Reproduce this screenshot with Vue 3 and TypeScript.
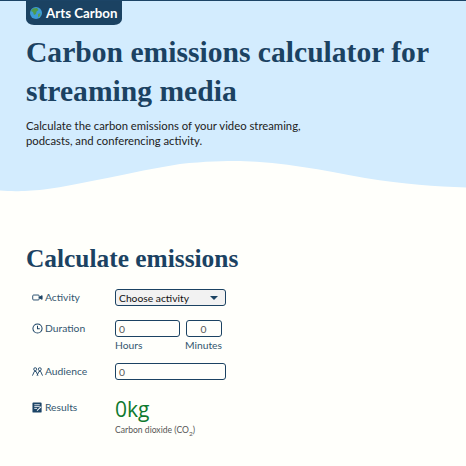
<script setup lang="ts">
const minutes = "0";
</script>

<template>
  <div class="page">
    <header class="hero">
      <div class="brand">
        <svg class="globe" viewBox="0 0 12 12" width="12" height="12">
          <circle cx="6" cy="6" r="6" fill="#3d9bd6" />
          <path d="M3 1.500 7 1l1.500 2-2 1.500L6 7 4 8 3 5 1 4z" fill="#4f9a4a" />
          <path d="M8 7l2.500-1-.5 3-2 1.500z" fill="#5aa04f" />
        </svg>
        <span>Arts Carbon</span>
      </div>
      <h1>Carbon emissions calculator for streaming media</h1>
      <p>Calculate the carbon emissions of your video streaming, podcasts, and conferencing activity.</p>
    </header>
    <svg class="wave" viewBox="0 0 466 40" width="466" height="40" preserveAspectRatio="none">
      <path d="M0 40V29.500C12 30.500 24 30.500 44 28.500C85 23 130 11 180 3C205 .3 225 0 240 0C285 1 320 9 365 17C405 23.500 435 25.500 466 26.500V40Z" fill="#fffffb" />
    </svg>
    <main class="calc">
      <h2>Calculate emissions</h2>
      <div class="row row-activity">
        <div class="label">
          <svg viewBox="0 0 12 12" width="11" height="11" fill="none" stroke="#1c4466" stroke-width="1">
            <rect x=".8" y="3.300" width="7" height="5.400" rx="1" />
            <path d="M8 5.500 11 4v4L8 6.500z" fill="#1c4466" />
          </svg>
          <span>Activity</span>
        </div>
        <div class="select">
          <span>Choose activity</span>
          <i class="caret"></i>
        </div>
      </div>
      <div class="row row-duration">
        <div class="label">
          <svg viewBox="0 0 12 12" width="11" height="11" fill="none" stroke="#1c4466" stroke-width="1.100">
            <circle cx="6" cy="6" r="5" />
            <path d="M6 3v3.300h2.500" />
          </svg>
          <span>Duration</span>
        </div>
        <div class="time">
          <div class="field">
            <div class="input hours">0</div>
            <span>Hours</span>
          </div>
          <div class="field minutes">
            <div class="input mins">{{ minutes }}</div>
            <span>Minutes</span>
          </div>
        </div>
      </div>
      <div class="row row-audience">
        <div class="label">
          <svg viewBox="0 0 12 12" width="11" height="11" fill="none" stroke="#1c4466" stroke-width="1">
            <circle cx="3.500" cy="3.500" r="1.600" />
            <circle cx="8.500" cy="3.500" r="1.600" />
            <path d="M.5 10.500 2.500 6h2l2 4.500M5.500 10.500l2-4.500h2l2 4.500" />
          </svg>
          <span>Audience</span>
        </div>
        <div class="input audience">0</div>
      </div>
      <div class="row row-results">
        <div class="label">
          <svg viewBox="0 0 12 12" width="11" height="11">
            <rect x=".5" y=".5" width="10" height="11" rx="1" fill="#1c4466" />
            <path d="M2.500 3h6M2.500 5h6M2.500 7h3" stroke="#fff" stroke-width=".9" />
            <path d="M5.500 9.500 10 5" stroke="#fff" stroke-width="1.100" />
          </svg>
          <span>Results</span>
        </div>
        <div class="result">
          <div class="value">0kg</div>
          <div class="unit">Carbon dioxide (CO<sub>2</sub>)</div>
        </div>
      </div>
    </main>
  </div>
</template>

<style>
html, body { margin: 0; background: #fffffb; overflow: hidden; }
</style>

<style scoped>
.page {
  width: 466px;
  height: 466px;
  overflow: hidden;
  font-family: Lato, "Open Sans", sans-serif;
  color: #1c4466;
  background: #fffffb;
}
.hero {
  background: #d3ecfe;
  border-top: 1px solid #1c4466;
  height: 161px;
  box-sizing: border-box;
  padding: 0 26px;
}
.brand {
  display: inline-flex;
  align-items: center;
  gap: 4px;
  height: 24px;
  padding: 0 0 0 4px;
  width: 96px;
  box-sizing: border-box;
  background: #1b4262;
  border-radius: 0 0 8px 8px / 0 0 6px 6px;
  color: #fff;
  font-weight: 700;
  font-size: 13.300px;
  white-space: nowrap;
  vertical-align: top;
}
.globe { flex: none; }
h1 {
  margin: 8px 0 0;
  font-family: "Liberation Serif", serif;
  font-weight: 700;
  font-size: 29.600px;
  line-height: 39px;
  color: #1b4262;
}
.hero p {
  margin: 7px 0 0;
  font-size: 11.300px;
  line-height: 15px;
  color: #222;
  max-width: 290px;
}
.wave { display: block; background: #d3ecfe; }
.calc { padding: 40px 26px 0; }
h2 {
  margin: 0 0 14px;
  font-family: "Liberation Serif", serif;
  font-weight: 700;
  font-size: 25.400px;
  line-height: 34px;
  color: #1b4262;
}
.row { display: flex; align-items: flex-start; }
.row-duration { margin-top: 14px; }
.row-audience { margin-top: 10px; }
.row-results { margin-top: 19px; }
.label {
  width: 89px;
  padding-left: 6px;
  box-sizing: border-box;
  display: flex;
  align-items: center;
  gap: 2px;
  font-size: 10.300px;
  line-height: 16px;
  color: #33566f;
}
.select, .input {
  box-sizing: border-box;
  border: 1.500px solid #1b4262;
  border-radius: 3px;
  height: 17px;
  background: #fffffb;
}
.select {
  width: 111px;
  display: flex;
  align-items: center;
  justify-content: space-between;
  padding: 0 7px 0 3px;
  font-size: 10.300px;
  color: #111;
  background: #f2f2f2;
}
.caret {
  width: 0;
  height: 0;
  border-left: 4px solid transparent;
  border-right: 4px solid transparent;
  border-top: 4px solid #1b4262;
}
.time { display: flex; gap: 5px; }
.field { display: flex; flex-direction: column; font-size: 10.300px; line-height: 16px; color: #33566f; }
.minutes { align-items: center; }
.input {
  display: flex;
  align-items: center;
  padding: 0 3px;
  font-size: 10.300px;
  color: #555;
}
.hours { width: 65px; }
.mins { width: 36px; justify-content: center; }
.audience { width: 111px; }
.result { color: #0e7a2e; }
.value { font-family: "Open Sans", sans-serif; font-size: 21px; line-height: 20px; }
.unit { margin-top: 5px; font-size: 8.600px; line-height: 12px; color: #555; }
.unit sub { font-size: 6.500px; line-height: 0; }
</style>
